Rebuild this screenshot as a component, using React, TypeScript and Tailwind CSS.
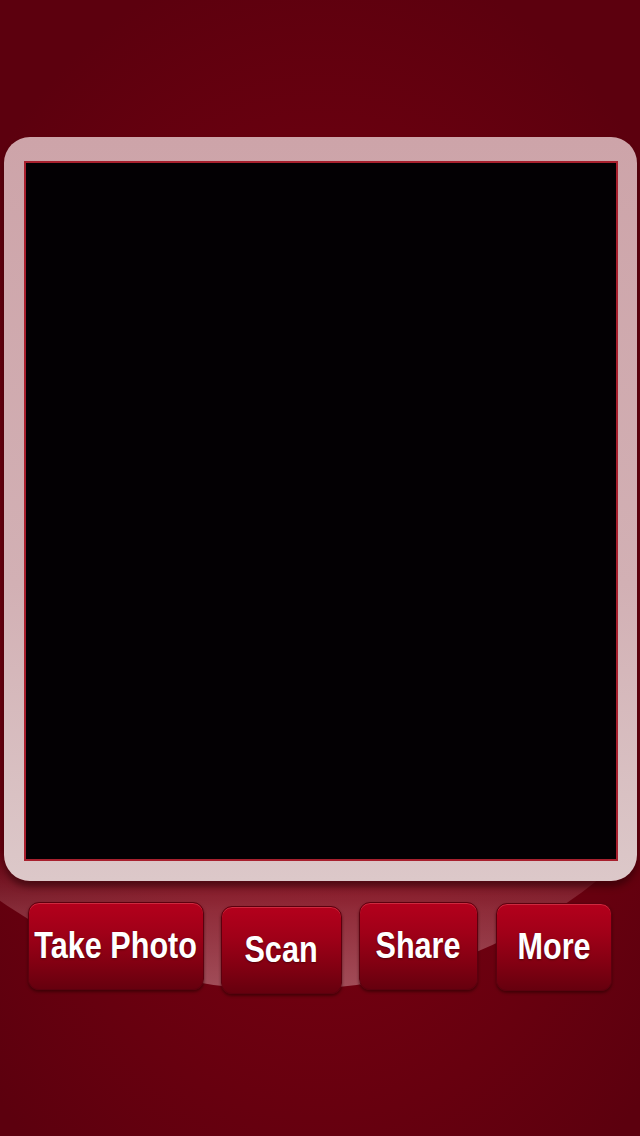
import React from "react";

const font = { fontFamily: '"Liberation Sans", Arial, sans-serif' };

function Btn({ label, w, extra = "" }: { label: string; w: string; extra?: string }) {
  return (
    <div
      className={`${w} ${extra} h-[88px] rounded-[11px] border border-[#5c000e] bg-[linear-gradient(180deg,#b4001c_0%,#a00018_35%,#820012_70%,#66000e_100%)] shadow-[0_2px_3px_rgba(40,0,0,0.6),inset_0_1px_0_rgba(255,120,130,0.35)] flex items-center justify-center`}
    >
      <span
        style={font}
        className="block whitespace-nowrap text-white font-bold text-[36px] leading-none scale-x-[0.85] [text-shadow:0_1px_2px_rgba(60,0,0,0.7)]"
      >
        {label}
      </span>
    </div>
  );
}

export default function App() {
  return (
    <div className="relative w-[640px] h-[1136px] overflow-hidden bg-[radial-gradient(ellipse_70%_60%_at_50%_55%,#7e0012_0%,#720010_45%,#5c000e_100%)]">
      {/* glossy glow disc behind the frame */}
      <div className="absolute left-[-215px] top-[-10px] w-[1000px] h-[1000px] rounded-full bg-[linear-gradient(180deg,rgba(255,255,255,0)_0%,rgba(255,255,255,0)_86%,rgba(255,200,205,0.22)_92%,rgba(255,215,220,0.36)_100%)]" />
      <div className="relative flex flex-col">
        <div className="h-[137px]" />
        <div className="ml-[4px] w-[633px] h-[744px] rounded-[26px] bg-[linear-gradient(180deg,#cda4a9_0%,#d2b0b4_60%,#dcc8c9_100%)] shadow-[0_6px_6px_rgba(40,0,5,0.55)] pt-[24px] pl-[20px]">
          <div className="w-[594px] h-[700px] bg-[#030003] border-2 border-[#a8202e]" />
        </div>
        <div className="flex items-start pl-[28px] pt-[21px] gap-[18px]">
          <Btn label="Take Photo" w="w-[176px]" />
          <Btn label="Scan" w="w-[121px]" extra="mt-[4px] ml-[-1px]" />
          <Btn label="Share" w="w-[119px]" extra="ml-[-1px]" />
          <Btn label="More" w="w-[116px]" extra="mt-[1px]" />
        </div>
      </div>
    </div>
  );
}
